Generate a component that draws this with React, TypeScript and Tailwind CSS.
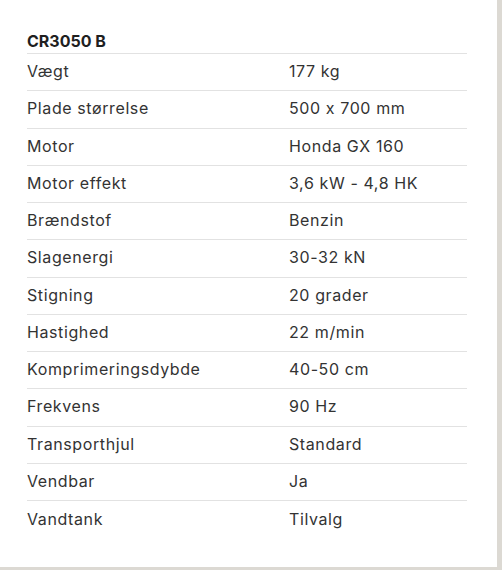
const specs: [string, string][] = [
  ['Vægt', '177 kg'],
  ['Plade størrelse', '500 x 700 mm'],
  ['Motor', 'Honda GX 160'],
  ['Motor effekt', '3,6 kW - 4,8 HK'],
  ['Brændstof', 'Benzin'],
  ['Slagenergi', '30-32 kN'],
  ['Stigning', '20 grader'],
  ['Hastighed', '22 m/min'],
  ['Komprimeringsdybde', '40-50 cm'],
  ['Frekvens', '90 Hz'],
  ['Transporthjul', 'Standard'],
  ['Vendbar', 'Ja'],
  ['Vandtank', 'Tilvalg'],
];

export default function App() {
  return (
    <div className="w-[502px] h-[570px] bg-white border-r-[5px] border-b-[3px] border-[#dcd9d3] font-['Inter',sans-serif] [font-feature-settings:'calt'_0] text-[#333333]">
      <div className="pl-[27px] pt-[29px] w-[467px]">
        <div className="h-[25px] border-b border-[#e2e2e2] text-[16px] leading-[24px] font-bold text-[#1f1f1f]">
          CR3050 B
        </div>
        {specs.map(([label, value], idx) => (
          <div
            key={label}
            className={`flex items-center h-[37.25px] pb-[2px] text-[16px] tracking-[0.6px] ${
              idx < specs.length - 1 ? 'border-b border-[#e2e2e2]' : ''
            }`}
          >
            <span className="w-[262px]">{label}</span>
            <span>{value}</span>
          </div>
        ))}
      </div>
    </div>
  );
}
